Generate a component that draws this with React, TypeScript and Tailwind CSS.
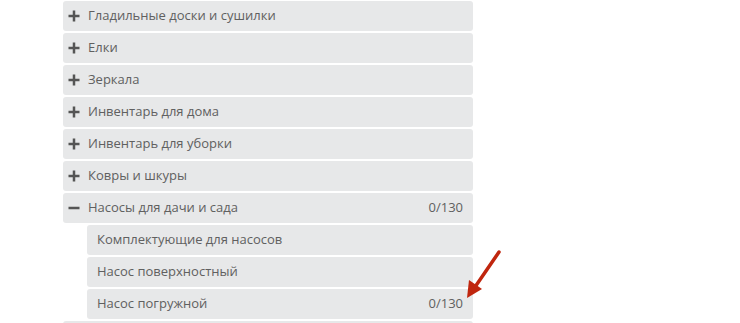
import React from 'react'

const categories = [
  'Гладильные доски и сушилки',
  'Елки',
  'Зеркала',
  'Инвентарь для дома',
  'Инвентарь для уборки',
  'Ковры и шкуры',
]

const subItems = [
  { title: 'Комплектующие для насосов', count: '' },
  { title: 'Насос поверхностный', count: '' },
  { title: 'Насос погружной', count: '0/130' },
]

function PlusIcon() {
  return (
    <svg width="12" height="12" viewBox="0 0 12 12" className="flex-none">
      <rect x="0.5" y="4.75" width="11" height="2.5" fill="#555" />
      <rect x="4.75" y="0.5" width="2.5" height="11" fill="#555" />
    </svg>
  )
}

function MinusIcon() {
  return (
    <svg width="12" height="12" viewBox="0 0 12 12" className="flex-none">
      <rect x="0.5" y="4.75" width="11" height="2.5" fill="#555" />
    </svg>
  )
}

export default function App() {
  return (
    <div
      className="relative h-[323px] w-[740px] overflow-hidden bg-white pl-[63px] pt-[1px] text-[13px] text-[#606060]"
      style={{ fontFamily: '"Open Sans", "Liberation Sans", sans-serif' }}
    >
      <div className="flex w-[410px] flex-col gap-[2px]">
        {categories.map((c) => (
          <div
            key={c}
            className="flex h-[30px] items-center gap-[8px] rounded-[3px] bg-[#e7e8e9] pl-[5px] pr-[10px]"
          >
            <PlusIcon />
            <span>{c}</span>
          </div>
        ))}
        <div className="flex h-[30px] items-center gap-[8px] rounded-[3px] bg-[#e7e8e9] pl-[5px] pr-[10px]">
          <MinusIcon />
          <span className="flex-1">Насосы для дачи и сада</span>
          <span>0/130</span>
        </div>
        <div className="flex flex-col gap-[2px] pl-[24px]">
          {subItems.map((s) => (
            <div
              key={s.title}
              className="flex h-[30px] items-center rounded-[3px] bg-[#e7e8e9] pl-[10px] pr-[10px]"
            >
              <span className="flex-1">{s.title}</span>
              {s.count && <span>{s.count}</span>}
            </div>
          ))}
        </div>
        <div className="h-[30px] rounded-[3px] bg-[#e7e8e9]" />
      </div>
      <svg
        className="absolute left-[460px] top-[248px]"
        width="50"
        height="56"
        viewBox="0 0 50 56"
      >
        <line x1="39" y1="4" x2="15" y2="39" stroke="#c0260e" strokeWidth="3.5" strokeLinecap="round" />
        <polygon points="7,50 9,32 22,41" fill="#c0260e" />
      </svg>
    </div>
  )
}
